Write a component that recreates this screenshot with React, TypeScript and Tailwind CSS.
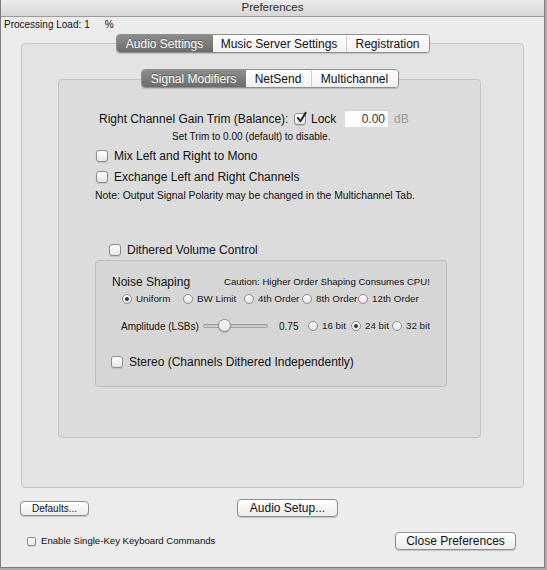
import React from "react";

const font = { fontFamily: '"Liberation Sans", Arial, sans-serif' };

function Check({ checked = false, small = false }: { checked?: boolean; small?: boolean }) {
  return (
    <span
      className={`relative inline-flex shrink-0 items-center justify-center border border-[#8d8d8d] bg-gradient-to-b from-white to-[#e6e6e6] shadow-[0_1px_1px_rgba(0,0,0,0.12)] ${
        small ? "h-[9px] w-[9px] rounded-[2px]" : "h-[12px] w-[12px] rounded-[3px]"
      }`}
    >
      {checked && (
        <svg viewBox="0 0 14 14" className="absolute -top-[3px] left-[0px] h-[13px] w-[13px]">
          <path d="M3 7.5 L5.8 11 L11.5 2" fill="none" stroke="#2b2b2b" strokeWidth="2.2" strokeLinecap="round" strokeLinejoin="round" />
        </svg>
      )}
    </span>
  );
}

function Radio({ on = false }: { on?: boolean }) {
  return (
    <span className="inline-flex h-[10px] w-[10px] shrink-0 items-center justify-center rounded-full border border-[#8d8d8d] bg-gradient-to-b from-white to-[#e4e4e4]">
      {on && <span className="h-[4px] w-[4px] rounded-full bg-[#333]" />}
    </span>
  );
}

function Opt({ label, on, w }: { label: string; on?: boolean; w: string }) {
  return (
    <span className={`flex shrink-0 items-center whitespace-nowrap ${w}`}>
      <Radio on={on} />
      <span className="ml-[4px] text-[9.8px] text-[#1a1a1a]">{label}</span>
    </span>
  );
}

function Tabs({ items }: { items: { label: string; w: string }[] }) {
  return (
    <div className="flex h-[19px] overflow-hidden rounded-[4px] border border-[#8e8e8e] shadow-[0_1px_1px_rgba(0,0,0,0.15)]">
      {items.map((t, i) => (
        <div
          key={t.label}
          className={`flex items-center justify-center whitespace-nowrap text-[12px] ${t.w} ${
            i === 0
              ? "bg-gradient-to-b from-[#8d8d8d] to-[#6c6c6c] text-white [text-shadow:0_-1px_0_rgba(0,0,0,0.35)]"
              : "bg-gradient-to-b from-white to-[#f1f1f1] text-[#111]"
          } ${i === 2 ? "border-l border-[#d2d2d2]" : ""}`}
        >
          {t.label}
        </div>
      ))}
    </div>
  );
}

function Btn({ label, cls }: { label: string; cls: string }) {
  return (
    <button className={`flex items-center justify-center whitespace-nowrap rounded-[4px] border border-[#8f8f8f] bg-gradient-to-b from-white to-[#ececec] text-[#111] shadow-[0_1px_1px_rgba(0,0,0,0.18)] ${cls}`}>
      {label}
    </button>
  );
}

export default function App() {
  return (
    <div className="h-[570px] w-[547px] bg-[#a9a9a9]" style={font}>
      <div className="flex h-[568px] w-[545px] flex-col border-x border-b border-[#7d7d7d] bg-[#ececec]">
        {/* title bar */}
        <div className="flex h-[17px] items-center justify-center border-b border-[#9c9c9c] bg-gradient-to-b from-[#ececec] to-[#d6d6d6] text-[11.5px] text-[#2e2e2e]">
          Preferences
        </div>

        <div className="flex h-[14px] items-center pl-[3px] text-[10px] text-[#111]">
          <span>Processing Load:</span>
          <span className="ml-[3px]">1</span>
          <span className="ml-[15px]">%</span>
        </div>

        {/* outer tabs */}
        <div className="relative z-10 ml-[20px] mt-[3px] flex w-[503px] justify-center">
          <Tabs
            items={[
              { label: "Audio Settings", w: "w-[96px]" },
              { label: "Music Server Settings", w: "w-[133px]" },
              { label: "Registration", w: "w-[83px]" },
            ]}
          />
        </div>

        <div className="-mt-[10px] ml-[20px] h-[445px] w-[503px] rounded-[4px] border border-[#c6c6c6] bg-[#e3e3e3] pt-[25px]">
          {/* inner tabs */}
          <div className="relative z-10 ml-[36px] flex w-[423px] justify-center">
            <Tabs
              items={[
                { label: "Signal Modifiers", w: "w-[104px]" },
                { label: "NetSend", w: "w-[65px]" },
                { label: "Multichannel", w: "w-[87px]" },
              ]}
            />
          </div>

          <div className="-mt-[9px] ml-[36px] h-[359px] w-[423px] rounded-[4px] border border-[#c3c3c3] bg-[#dcdcdc] pt-[30px] text-[#111]">
            <div className="flex h-[17px] items-center whitespace-nowrap pl-[40px] text-[12px]">
              <span className="w-[195px]">Right Channel Gain Trim (Balance):</span>
              <Check checked />
              <span className="ml-[5px] w-[34px]">Lock</span>
              <span className="flex h-[17px] w-[43px] items-center justify-end border-t border-[#cfcfcf] bg-white pr-[3px] text-[#333]">
                0.00
              </span>
              <span className="ml-[6px] text-[#9b9b9b]">dB</span>
            </div>
            <div className="mt-[2px] flex h-[14px] items-center whitespace-nowrap pl-[113px] text-[10px]">
              Set Trim to 0.00 (default) to disable.
            </div>
            <div className="mt-[4px] flex h-[18px] items-center whitespace-nowrap pl-[37px] text-[12px]">
              <Check />
              <span className="ml-[6px]">Mix Left and Right to Mono</span>
            </div>
            <div className="mt-[3px] flex h-[18px] items-center whitespace-nowrap pl-[37px] text-[12px]">
              <Check />
              <span className="ml-[6px]">Exchange Left and Right Channels</span>
            </div>
            <div className="mt-[3px] flex h-[14px] items-center whitespace-nowrap pl-[36px] text-[10.4px]">
              Note: Output Signal Polarity may be changed in the Multichannel Tab.
            </div>

            <div className="mt-[38px] flex h-[18px] items-center whitespace-nowrap pl-[50px] text-[12px]">
              <Check />
              <span className="ml-[6px]">Dithered Volume Control</span>
            </div>

            <div className="ml-[36px] mt-[1px] h-[127px] w-[352px] rounded-[4px] border border-[#bdbdbd] bg-[#d6d6d6] pt-[13px]">
              <div className="flex h-[16px] items-center whitespace-nowrap pl-[16px]">
                <span className="w-[112px] text-[12px]">Noise Shaping</span>
                <span className="text-[9.6px]">Caution: Higher Order Shaping Consumes CPU!</span>
              </div>
              <div className="mt-[2px] flex h-[14px] items-center pl-[26px]">
                <Opt label="Uniform" on w="w-[61px]" />
                <Opt label="BW Limit" w="w-[61px]" />
                <Opt label="4th Order" w="w-[58px]" />
                <Opt label="8th Order" w="w-[56px]" />
                <Opt label="12th Order" w="w-[72px]" />
              </div>
              <div className="mt-[12px] flex h-[16px] items-center whitespace-nowrap pl-[25px]">
                <span className="w-[82px] text-[10px]">Amplitude (LSBs)</span>
                <span className="relative flex h-[14px] w-[65px] items-center">
                  <span className="h-[4px] w-full rounded-full border border-[#9d9d9d] bg-gradient-to-b from-[#b9b9b9] to-[#e2e2e2]" />
                  <span className="absolute left-[15px] top-[0px] h-[13px] w-[13px] rounded-full border border-[#8a8a8a] bg-gradient-to-b from-white to-[#e3e3e3] shadow-[0_1px_1px_rgba(0,0,0,0.2)]" />
                </span>
                <span className="ml-[11px] w-[29px] text-[10px]">0.75</span>
                <Opt label="16 bit" w="w-[43px]" />
                <Opt label="24 bit" on w="w-[41px]" />
                <Opt label="32 bit" w="w-[42px]" />
              </div>
              <div className="mt-[19px] flex h-[18px] items-center whitespace-nowrap pl-[15px] text-[12px]">
                <Check />
                <span className="ml-[6px]">Stereo (Channels Dithered Independently)</span>
              </div>
            </div>
          </div>
        </div>

        {/* bottom buttons */}
        <div className="mt-[11px] flex h-[18px] items-center">
          <Btn label="Defaults..." cls="ml-[19px] h-[15px] w-[69px] text-[10px]" />
          <Btn label="Audio Setup..." cls="ml-[148px] h-[18px] w-[101px] text-[12px]" />
        </div>
        <div className="mt-[15px] flex h-[18px] items-center">
          <span className="ml-[26px]">
            <Check small />
          </span>
          <span className="ml-[5px] whitespace-nowrap text-[9.6px] text-[#111]">Enable Single-Key Keyboard Commands</span>
          <Btn label="Close Preferences" cls="ml-auto mr-[28px] h-[18px] w-[121px] text-[12px]" />
        </div>
      </div>
    </div>
  );
}
